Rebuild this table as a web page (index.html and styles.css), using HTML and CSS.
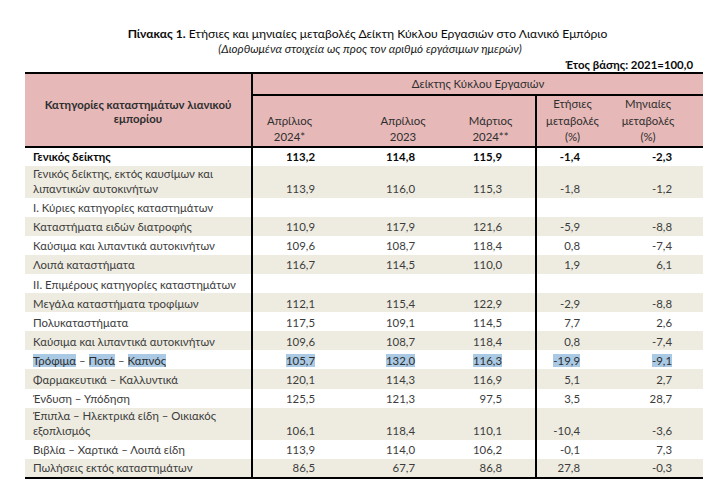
FILE: index.html
```html
<!DOCTYPE html>
<html lang="el">
<head>
<meta charset="utf-8">
<title>Πίνακας 1</title>
<link rel="stylesheet" href="styles.css">
</head>
<body>
<div class="page">
  <h1 class="title"><b>Πίνακας 1.</b> Ετήσιες και μηνιαίες μεταβολές Δείκτη Κύκλου Εργασιών στο Λιανικό Εμπόριο</h1>
  <p class="subtitle">(Διορθωμένα στοιχεία ως προς τον αριθμό εργάσιμων ημερών)</p>
  <p class="base">Έτος βάσης: 2021=100,0</p>
  <table class="tbl">
    <colgroup>
      <col class="w-cat"><col class="w-c2"><col class="w-c3"><col class="w-c4"><col class="w-c5"><col class="w-c6">
    </colgroup>
    <thead>
      <tr class="hrow-a">
        <th rowspan="2" class="h-cat">Κατηγορίες καταστημάτων λιανικού εμπορίου</th>
        <th colspan="5" class="h-group">Δείκτης Κύκλου Εργασιών</th>
      </tr>
      <tr class="hrow-b">
        <th class="h c2">Απρίλιος<br>2024*</th>
        <th class="h c3">Απρίλιος<br>2023</th>
        <th class="h c4">Μάρτιος<br>2024**</th>
        <th class="h c5 sep">Ετήσιες<br>μεταβολές<br>(%)</th>
        <th class="h c6">Μηνιαίες<br>μεταβολές<br>(%)</th>
      </tr>
    </thead>
    <tbody>
      <tr class="strong"><td class="cat">Γενικός δείκτης</td><td class="n c2">113,2</td><td class="n c3">114,8</td><td class="n c4">115,9</td><td class="n c5 sep">-1,4</td><td class="n c6">-2,3</td></tr>
      <tr class="alt tall"><td class="cat">Γενικός δείκτης, εκτός καυσίμων και<br>λιπαντικών αυτοκινήτων</td><td class="n c2">113,9</td><td class="n c3">116,0</td><td class="n c4">115,3</td><td class="n c5 sep">-1,8</td><td class="n c6">-1,2</td></tr>
      <tr><td class="cat">Ι. Κύριες κατηγορίες καταστημάτων</td><td class="n c2"></td><td class="n c3"></td><td class="n c4"></td><td class="n c5 sep"></td><td class="n c6"></td></tr>
      <tr class="alt"><td class="cat">Καταστήματα ειδών διατροφής</td><td class="n c2">110,9</td><td class="n c3">117,9</td><td class="n c4">121,6</td><td class="n c5 sep">-5,9</td><td class="n c6">-8,8</td></tr>
      <tr><td class="cat">Καύσιμα και λιπαντικά αυτοκινήτων</td><td class="n c2">109,6</td><td class="n c3">108,7</td><td class="n c4">118,4</td><td class="n c5 sep">0,8</td><td class="n c6">-7,4</td></tr>
      <tr class="alt"><td class="cat">Λοιπά καταστήματα</td><td class="n c2">116,7</td><td class="n c3">114,5</td><td class="n c4">110,0</td><td class="n c5 sep">1,9</td><td class="n c6">6,1</td></tr>
      <tr><td class="cat">ΙΙ. Επιμέρους κατηγορίες καταστημάτων</td><td class="n c2"></td><td class="n c3"></td><td class="n c4"></td><td class="n c5 sep"></td><td class="n c6"></td></tr>
      <tr class="alt"><td class="cat">Μεγάλα καταστήματα τροφίμων</td><td class="n c2">112,1</td><td class="n c3">115,4</td><td class="n c4">122,9</td><td class="n c5 sep">-2,9</td><td class="n c6">-8,8</td></tr>
      <tr><td class="cat">Πολυκαταστήματα</td><td class="n c2">117,5</td><td class="n c3">109,1</td><td class="n c4">114,5</td><td class="n c5 sep">7,7</td><td class="n c6">2,6</td></tr>
      <tr class="alt"><td class="cat">Καύσιμα και λιπαντικά αυτοκινήτων</td><td class="n c2">109,6</td><td class="n c3">108,7</td><td class="n c4">118,4</td><td class="n c5 sep">0,8</td><td class="n c6">-7,4</td></tr>
      <tr class="sel"><td class="cat"><mark>Τρόφιμα</mark> – <mark>Ποτά</mark> – <mark>Καπνός</mark></td><td class="n c2"><mark>105,7</mark></td><td class="n c3"><mark>132,0</mark></td><td class="n c4"><mark>116,3</mark></td><td class="n c5 sep"><mark>-19,9</mark></td><td class="n c6"><mark>-9,1</mark></td></tr>
      <tr class="alt"><td class="cat">Φαρμακευτικά – Καλλυντικά</td><td class="n c2">120,1</td><td class="n c3">114,3</td><td class="n c4">116,9</td><td class="n c5 sep">5,1</td><td class="n c6">2,7</td></tr>
      <tr><td class="cat">Ένδυση – Υπόδηση</td><td class="n c2">125,5</td><td class="n c3">121,3</td><td class="n c4">97,5</td><td class="n c5 sep">3,5</td><td class="n c6">28,7</td></tr>
      <tr class="alt tall"><td class="cat">Έπιπλα – Ηλεκτρικά είδη – Οικιακός<br>εξοπλισμός</td><td class="n c2">106,1</td><td class="n c3">118,4</td><td class="n c4">110,1</td><td class="n c5 sep">-10,4</td><td class="n c6">-3,6</td></tr>
      <tr><td class="cat">Βιβλία – Χαρτικά – Λοιπά είδη</td><td class="n c2">113,9</td><td class="n c3">114,0</td><td class="n c4">106,2</td><td class="n c5 sep">-0,1</td><td class="n c6">7,3</td></tr>
      <tr class="alt"><td class="cat">Πωλήσεις εκτός καταστημάτων</td><td class="n c2">86,5</td><td class="n c3">67,7</td><td class="n c4">86,8</td><td class="n c5 sep">27,8</td><td class="n c6">-0,3</td></tr>
    </tbody>
  </table>
</div>
</body>
</html>
```

FILE: styles.css
```css
* { box-sizing: border-box; }
html, body { margin: 0; padding: 0; background: #fff; }
body {
  font-family: Lato, "Noto Sans", sans-serif;
  font-size: 11.4px;
  color: #3a3a3a;
}
.page {
  width: 678px;
  margin-left: 25px;
  padding-top: 26px;
}
.title {
  margin: 0;
  font-size: 12.1px;
  font-weight: 400;
  line-height: 15px;
  color: #0a0a0a;
  text-align: center;
  padding-left: 7px;
}
.title b { font-weight: 700; }
.subtitle {
  margin: 0;
  font-size: 11.7px;
  font-style: italic;
  line-height: 15px;
  color: #1a1a1a;
  text-align: center;
  padding-left: 12px;
}
.base {
  margin: 2px 0 0;
  font-weight: 700;
  line-height: 14px;
  color: #0a0a0a;
  text-align: right;
  padding-right: 10px;
}
.tbl {
  width: 678px;
  border-collapse: collapse;
  table-layout: fixed;
  border-top: 2px solid #000;
  border-bottom: 2px solid #000;
}
.w-cat { width: 227px; }
.w-c2 { width: 94px; }
.w-c3 { width: 100px; }
.w-c4 { width: 90px; }
.w-c5 { width: 81px; }
.w-c6 { width: 86px; }

thead th {
  background: #e6b9b8;
  font-weight: 400;
  color: #2e2e2e;
  padding: 0;
}
.hrow-a { height: 20px; }
.hrow-b { height: 48px; }
.h-cat {
  line-height: 14px;
  text-align: center;
  vertical-align: middle;
  padding: 4px 0 0 0;
  border-right: 2px solid #000;
  border-bottom: 2px solid #000;
}
thead th.h-cat { font-weight: 700; }
.h-group {
  line-height: 20px;
  text-align: center;
  border-bottom: 2px solid #000;
}
.hrow-b th {
  line-height: 16.5px;
  vertical-align: bottom;
  text-align: center;
  border-bottom: 2px solid #000;
  padding-bottom: 0;
}
.h.c2 { padding-right: 20px; }
.h.c3 { padding-left: 14px; }
.h.c4 { padding-right: 0; }
.h.c5 { padding-right: 9px; }
.h.c6 { padding-right: 24px; }
.sep { border-left: 2px solid #000; }

tbody tr { height: 19.1px; }
tbody tr.tall { height: 31.5px; }
tbody tr.alt td { background: #eeece1; }
tbody td {
  line-height: 15.5px;
  vertical-align: bottom;
  padding: 0 0 1px;
  color: #3c3c3c;
  white-space: nowrap;
}
td.cat {
  padding-left: 8px;
  padding-right: 2px;
  border-right: 2px solid #000;
}
td.n { text-align: right; }
td.n.c2 { padding-right: 31px; }
td.n.c3 { padding-right: 31px; }
td.n.c4 { padding-right: 33px; }
td.n.c5 { padding-right: 37px; }
td.n.c6 { padding-right: 31px; }
tr.strong td { font-weight: 700; color: #0a0a0a; }
mark {
  background: #a9c9e4;
  color: #2e2e2e;
  padding: 0;
}
```
